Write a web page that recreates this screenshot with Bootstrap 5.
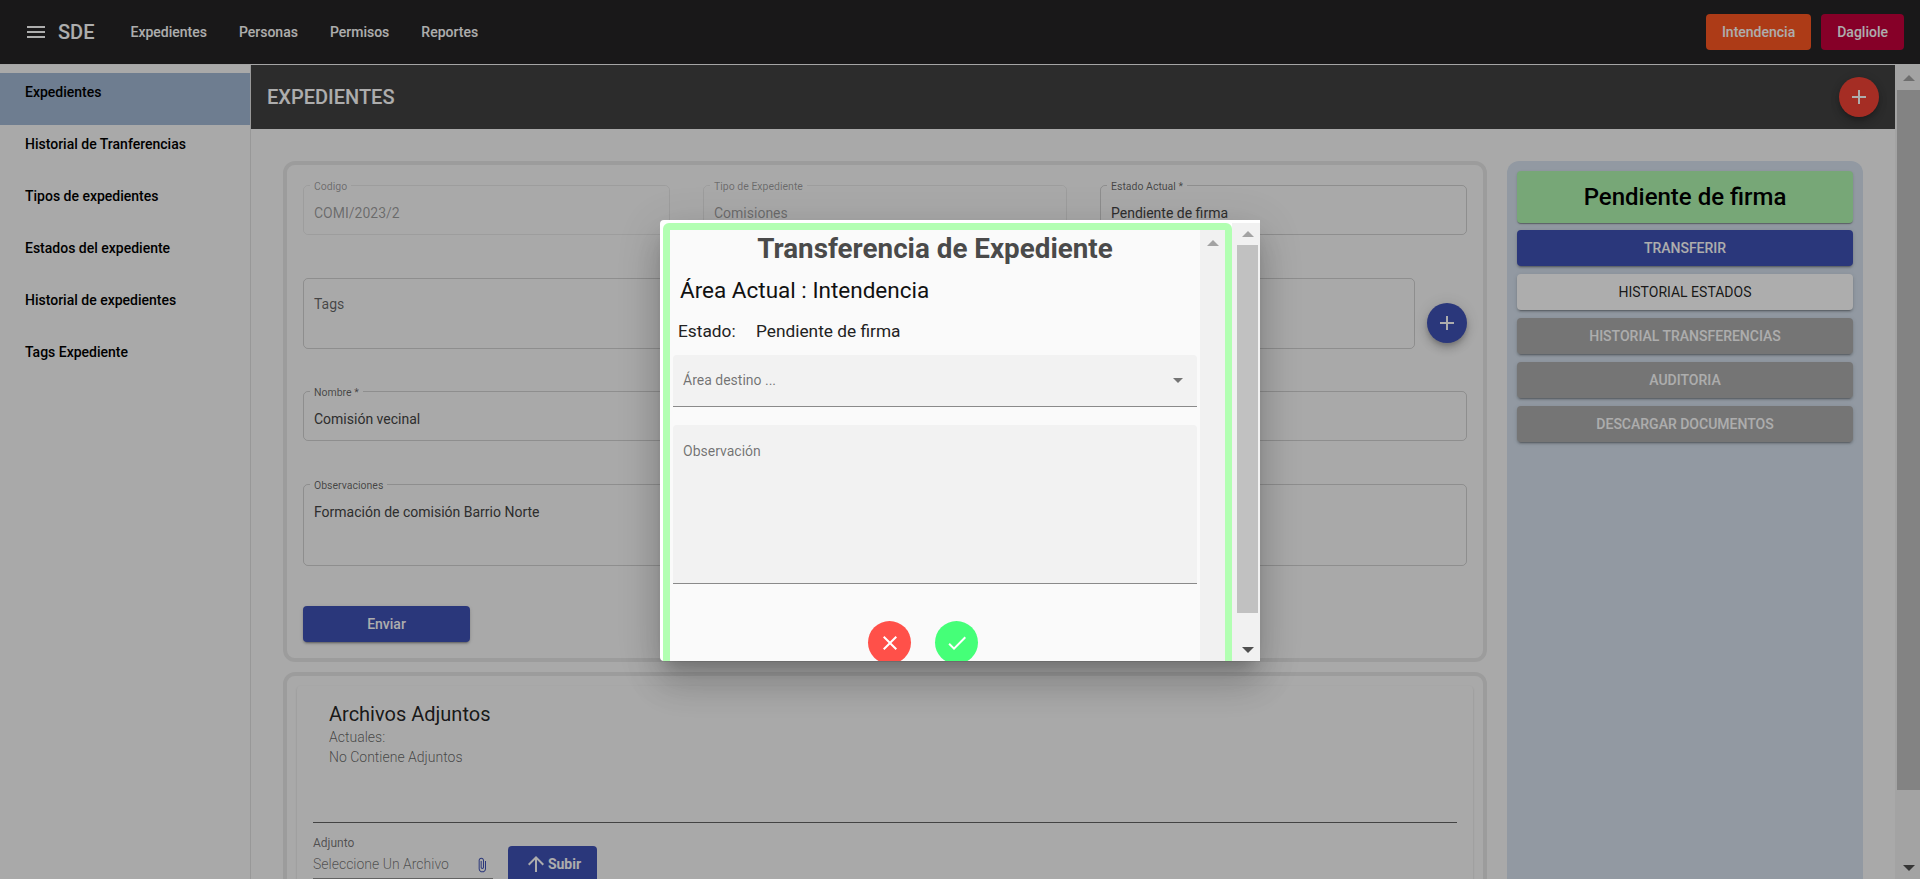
<!DOCTYPE html>
<html lang="es">
<head>
    <meta charset="UTF-8">
    <meta name="viewport" content="width=device-width, initial-scale=1.0">
    <title>SDE - Expedientes</title>
    <link rel="stylesheet" href="https://cdn.jsdelivr.net/npm/bootstrap@5.3.0/dist/css/bootstrap.min.css">
    <style>
        html, body { height: 100%; overflow: hidden; }
        body { font-family: Roboto, "Liberation Sans", sans-serif; font-size: 14px; background: #fafafa; color: rgba(0,0,0,.87); }
        svg { fill: currentColor; display: block; flex: none; }

        /* Barra superior */
        .barra-top { height: 65px; padding: 0 16px 0 24px; background: #262425; border-bottom: 1px solid #f4f4f4; flex: none; color: #fff; }
        .barra-top .navbar-brand { font-size: 20px; font-weight: 500; color: #fff; padding: 0; margin: 0 36px 0 10px; }
        .barra-top .navbar-nav .nav-link { font-size: 14px; font-weight: 500; color: #fff; padding: 0; margin-right: 32px; }
        .btn-top { height: 36px; padding: 0 16px; font-size: 14px; font-weight: 500; color: #fff; border: 0; border-radius: 4px; }
        .btn-area { background: #ff5722; }
        .btn-user { background: #c6003c; }
        .grupo-top { gap: 10px; }

        /* Lateral */
        .lateral { width: 251px; flex: none; padding-top: 8px; border-right: 1px solid #e0e0e0; }
        .lateral .list-group-item { height: 52px; padding: 10px 0 0 25px; border: 0; background: transparent; font-weight: 500; font-size: 14px; line-height: 18px; color: #000; border-radius: 0; }
        .lateral .list-group-item.active { background: #a2b8d4; color: #000; }

        .cabecera { height: 64px; background: #424242; color: #fff; padding: 0 16px 0 16px; flex: none; }
        .cabecera h1 { font-size: 20px; font-weight: 500; margin: 0; }
        .btn-redondo { width: 40px; height: 40px; border-radius: 50%; border: 0; color: #fff; padding: 0; flex: none; box-shadow: 0 3px 5px -1px rgba(0,0,0,.2), 0 6px 10px 0 rgba(0,0,0,.14), 0 1px 18px 0 rgba(0,0,0,.12); }
        .fondo-rojo { background: #f44336; }
        .fondo-azul { background: #3f51b5; }

        .zona { padding: 32px 32px 0 32px; gap: 20px; min-height: 0; overflow: hidden; }
        .marco { border: 4px solid #e6e6e6; border-radius: 12px; }
        .marco-form { padding: 12px 16px 16px; margin-bottom: 10px; }
        .fila-campos { display: grid; grid-template-columns: 367px 364px 367px; column-gap: 33px; }
        .campo { height: 58px; margin: 0; padding: 0 6px; border: 1px solid rgba(0,0,0,.16); border-radius: 5px; min-width: 0; }
        .campo legend { float: none; width: auto; font-size: 10.5px; line-height: 12px; margin: 0; padding: 4px 4px 0; color: rgba(0,0,0,.6); }
        .campo .valor { padding: 10px 4px 0; line-height: 20px; color: #444; }
        .campo.apagado { border-color: rgba(0,0,0,.07); }
        .campo.apagado legend, .campo.apagado .valor { color: rgba(0,0,0,.38); }
        .campo-nombre { margin-top: 34px; }
        .campo-obs { margin-top: 35px; height: 90px; }
        .campo-tags { height: 71px; margin-top: 43px; padding: 15px 10px; border: 1px solid rgba(0,0,0,.16); border-radius: 5px; color: rgba(0,0,0,.6); line-height: 20px; }
        .fila-tags { gap: 12px; }
        .btn-mas { margin-top: 68px; }
        .btn-enviar { display: block; width: 167px; height: 36px; margin-top: 40px; padding: 0; font-size: 14px; font-weight: 500; color: #fff; background: #3f51b5; border: 0; border-radius: 4px; box-shadow: 0 3px 1px -2px rgba(0,0,0,.2), 0 2px 2px 0 rgba(0,0,0,.14), 0 1px 5px 0 rgba(0,0,0,.12); }

        .marco-adjuntos { padding: 10px; height: 400px; }
        .caja-adjuntos { padding: 16px 16px 0; height: 100%; background: #fafafa; border: 0; border-radius: 4px; box-shadow: 0 2px 1px -1px rgba(0,0,0,.2), 0 1px 1px 0 rgba(0,0,0,.14), 0 1px 3px 0 rgba(0,0,0,.12); }
        .caja-adjuntos h2 { font-size: 20px; font-weight: 400; line-height: 24px; margin: 0 0 1px 16px; }
        .caja-adjuntos p { margin: 0 0 0 16px; line-height: 20px; color: rgba(0,0,0,.6); font-weight: 300; }
        .linea-adjuntos { height: 56px; border-bottom: 1px solid rgba(0,0,0,.6); margin-bottom: 14px; }
        .selector { width: 180px; border-bottom: 1px solid rgba(0,0,0,.42); height: 42px; color: rgba(0,0,0,.54); font-weight: 300; }
        .selector small { display: block; font-size: 12px; line-height: 13px; margin-bottom: 4px; font-weight: 400; }
        .selector svg { color: #3f51b5; margin-right: 3px; }
        .btn-subir { width: 89px; height: 36px; margin: 9px 0 0 15px; padding: 0; font-size: 14px; font-weight: 700; color: #fff; background: #3f51b5; border: 0; border-radius: 4px; }

        /* Panel derecho */
        .panel { width: 356px; flex: none; padding: 10px; background: #d7e2ef; border-radius: 12px 12px 0 0; }
        .estado-box { height: 52px; line-height: 52px; text-align: center; font-size: 24px; font-weight: 500; color: #000; background: #b0f7b0; border-radius: 4px; margin-bottom: 7px; box-shadow: 0 2px 1px -1px rgba(0,0,0,.2), 0 1px 1px 0 rgba(0,0,0,.14), 0 1px 3px 0 rgba(0,0,0,.12); }
        .btn-panel { display: block; width: 100%; height: 36px; margin-bottom: 8px; padding: 0; font-size: 14px; font-weight: 500; border: 0; border-radius: 4px; text-transform: uppercase; box-shadow: 0 3px 1px -2px rgba(0,0,0,.2), 0 2px 2px 0 rgba(0,0,0,.14), 0 1px 5px 0 rgba(0,0,0,.12); }
        .btn-panel.azul { background: #3f51b5; color: #fff; }
        .btn-panel.blanco { background: #fff; color: rgba(0,0,0,.87); font-weight: 400; }
        .btn-panel.gris { background: #adadad; color: #fff; }

        /* Barras de desplazamiento dibujadas */
        .scroll-y { background: #f1f1f1; flex: none; }
        .scroll-pagina { width: 25px; padding-left: 2px; }
        .scroll-dialogo { width: 28px; padding: 0 2px 0 5px; }
        .scroll-interno { width: 25px; }
        .tope { height: 25px; flex: none; }
        .scroll-dialogo .tope { height: 22px; }
        .flecha-up, .flecha-down { width: 0; height: 0; border-left: 6px solid transparent; border-right: 6px solid transparent; }
        .flecha-up { border-bottom: 6px solid #a3a3a3; }
        .flecha-down { border-top: 6px solid #505050; }
        .pulgar { background: #c1c1c1; }

        /* Dialogo */
        .fondo-oscuro { position: fixed; top: 0; right: 0; bottom: 0; left: 0; z-index: 10; background: rgba(0,0,0,.32); }
        .dialogo { position: fixed; left: 660px; top: 220px; z-index: 11; width: 600px; height: 441px; overflow: hidden; padding: 3px 0 0 3px; background: #fff; border-radius: 4px 0 0 4px; box-shadow: 0 11px 15px -7px rgba(0,0,0,.2), 0 24px 38px 3px rgba(0,0,0,.14), 0 9px 46px 8px rgba(0,0,0,.12); }
        .caja-verde { width: 569px; height: 460px; border: 7px solid #b2ffb2; border-radius: 6px; background: #fafafa; }
        .cuerpo-dialogo { width: 530px; padding: 0 3px; }
        .titulo-dialogo { font-size: 27.8px; font-weight: 700; line-height: 38px; text-align: center; color: #4a4a4a; margin: 0; }
        .area-actual { font-size: 22.5px; line-height: 30px; margin: 7px 0 0 7px; color: #111; }
        .estado-linea { font-size: 17.3px; line-height: 22px; margin: 15px 0 0 5px; color: #222; }
        .estado-linea span { display: inline-block; width: 78px; }
        .relleno { background: #f2f2f2; border-bottom: 1px solid #8a8a8a; border-radius: 4px 4px 0 0; padding: 0 10px; color: rgba(0,0,0,.54); }
        .relleno-select { height: 52px; margin-top: 13px; }
        .relleno-area { height: 159px; margin-top: 18px; padding-top: 16px; line-height: 20px; }
        .flecha-select { width: 0; height: 0; border-left: 5px solid transparent; border-right: 5px solid transparent; border-top: 5px solid #757575; margin-right: 4px; }
        .acciones { gap: 24px; margin-top: 37px; padding-right: 24px; }
        .btn-accion { width: 43px; height: 43px; padding: 0; border: 0; border-radius: 50%; color: #fff; }
        .btn-cancelar { background: #ff5049; }
        .btn-aceptar { background: #45ff78; }
    </style>
</head>
<body class="d-flex flex-column">
    <nav class="navbar navbar-expand barra-top">
        <div class="d-flex align-items-center">
            <svg width="24" height="24" viewBox="0 0 24 24"><path d="M3 18h18v-2H3v2zm0-5h18v-2H3v2zm0-7v2h18V6H3z"/></svg>
            <a class="navbar-brand" href="#">SDE</a>
            <ul class="navbar-nav">
                <li class="nav-item"><a class="nav-link" href="#">Expedientes</a></li>
                <li class="nav-item"><a class="nav-link" href="#">Personas</a></li>
                <li class="nav-item"><a class="nav-link" href="#">Permisos</a></li>
                <li class="nav-item"><a class="nav-link" href="#">Reportes</a></li>
            </ul>
        </div>
        <div class="d-flex grupo-top ms-auto">
            <button class="btn btn-top btn-area">Intendencia</button>
            <button class="btn btn-top btn-user">Dagliole</button>
        </div>
    </nav>

    <div class="d-flex flex-grow-1" style="min-height:0">
        <!-- Menu lateral -->
        <aside class="lateral list-group list-group-flush">
            <a href="#" class="list-group-item active">Expedientes</a>
            <a href="#" class="list-group-item">Historial de Tranferencias</a>
            <a href="#" class="list-group-item">Tipos de expedientes</a>
            <a href="#" class="list-group-item">Estados del expediente</a>
            <a href="#" class="list-group-item">Historial de expedientes</a>
            <a href="#" class="list-group-item">Tags Expediente</a>
        </aside>

        <main class="d-flex flex-column flex-grow-1" style="min-width:0">
            <header class="cabecera d-flex align-items-center justify-content-between">
                <h1>EXPEDIENTES</h1>
                <button class="btn-redondo fondo-rojo d-flex align-items-center justify-content-center">
                    <svg width="24" height="24" viewBox="0 0 24 24"><path d="M19 13h-6v6h-2v-6H5v-2h6V5h2v6h6v2z"/></svg>
                </button>
            </header>

            <div class="zona d-flex flex-grow-1">
                <div class="flex-grow-1" style="min-width:0">
                    <form class="marco marco-form">
                        <div class="fila-campos">
                            <fieldset class="campo apagado"><legend>Codigo</legend><div class="valor">COMI/2023/2</div></fieldset>
                            <fieldset class="campo apagado"><legend>Tipo de Expediente</legend><div class="valor">Comisiones</div></fieldset>
                            <fieldset class="campo"><legend>Estado Actual *</legend><div class="valor">Pendiente de firma</div></fieldset>
                        </div>
                        <div class="d-flex fila-tags">
                            <div class="campo-tags flex-grow-1">Tags</div>
                            <button type="button" class="btn-redondo fondo-azul btn-mas d-flex align-items-center justify-content-center">
                                <svg width="24" height="24" viewBox="0 0 24 24"><path d="M19 13h-6v6h-2v-6H5v-2h6V5h2v6h6v2z"/></svg>
                            </button>
                        </div>
                        <fieldset class="campo campo-nombre"><legend>Nombre *</legend><div class="valor">Comisión vecinal</div></fieldset>
                        <fieldset class="campo campo-obs"><legend>Observaciones</legend><div class="valor">Formación de comisión Barrio Norte</div></fieldset>
                        <button type="button" class="btn-enviar">Enviar</button>
                    </form>

                    <section class="marco marco-adjuntos">
                        <div class="card caja-adjuntos">
                            <h2>Archivos Adjuntos</h2>
                            <p>Actuales:</p>
                            <p>No Contiene Adjuntos</p>
                            <div class="linea-adjuntos"></div>
                            <div class="d-flex">
                                <div class="selector">
                                    <small>Adjunto</small>
                                    <div class="d-flex align-items-center justify-content-between">
                                        <span>Seleccione Un Archivo</span>
                                        <svg width="16" height="16" viewBox="0 0 24 24"><path d="M16.5 6v11.5c0 2.21-1.79 4-4 4s-4-1.79-4-4V5c0-1.38 1.12-2.5 2.5-2.5s2.5 1.12 2.5 2.5v10.5c0 .55-.45 1-1 1s-1-.45-1-1V6H10v9.5c0 1.38 1.12 2.5 2.5 2.5s2.5-1.12 2.5-2.5V5c0-2.21-1.79-4-4-4S7 2.79 7 5v12.5c0 3.04 2.46 5.5 5.5 5.5s5.5-2.46 5.5-5.5V6h-1.5z"/></svg>
                                    </div>
                                </div>
                                <button type="button" class="btn btn-subir d-flex align-items-center justify-content-center">
                                    <svg width="24" height="24" viewBox="0 0 24 24"><path d="M4 12l1.41 1.41L11 7.83V20h2V7.83l5.58 5.59L20 12l-8-8-8 8z"/></svg>
                                    Subir
                                </button>
                            </div>
                        </div>
                    </section>
                </div>

                <!-- Panel de estado -->
                <aside class="panel">
                    <div class="estado-box">Pendiente de firma</div>
                    <button class="btn-panel azul">Transferir</button>
                    <button class="btn-panel blanco">Historial Estados</button>
                    <button class="btn-panel gris">Historial Transferencias</button>
                    <button class="btn-panel gris">Auditoria</button>
                    <button class="btn-panel gris">Descargar Documentos</button>
                </aside>
            </div>
        </main>

        <div class="scroll-y scroll-pagina d-flex flex-column">
            <div class="tope d-flex align-items-center justify-content-center"><div class="flecha-up"></div></div>
            <div class="pulgar" style="height:700px"></div>
            <div class="d-flex flex-column flex-grow-1 justify-content-end align-items-center pb-2"><div class="flecha-down"></div></div>
        </div>
    </div>

    <div class="fondo-oscuro"></div>

    <!-- Dialogo de transferencia -->
    <div class="dialogo d-flex">
        <div class="caja-verde d-flex">
            <div class="cuerpo-dialogo">
                <h2 class="titulo-dialogo">Transferencia de Expediente</h2>
                <div class="area-actual">Área Actual : Intendencia</div>
                <div class="estado-linea"><span>Estado:</span>Pendiente de firma</div>
                <div class="relleno relleno-select d-flex align-items-center justify-content-between">
                    <span>Área destino ...</span>
                    <div class="flecha-select"></div>
                </div>
                <div class="relleno relleno-area">Observación</div>
                <div class="acciones d-flex justify-content-center">
                    <button class="btn-accion btn-cancelar d-flex align-items-center justify-content-center">
                        <svg width="24" height="24" viewBox="0 0 24 24"><path d="M19 6.41L17.59 5 12 10.59 6.41 5 5 6.41 10.59 12 5 17.59 6.41 19 12 13.41 17.59 19 19 17.59 13.41 12z"/></svg>
                    </button>
                    <button class="btn-accion btn-aceptar d-flex align-items-center justify-content-center">
                        <svg width="24" height="24" viewBox="0 0 24 24"><path d="M9 16.17L4.83 12l-1.42 1.41L9 19 21 7l-1.41-1.41z"/></svg>
                    </button>
                </div>
            </div>
            <div class="scroll-y scroll-interno d-flex flex-column">
                <div class="tope d-flex align-items-center justify-content-center"><div class="flecha-up"></div></div>
            </div>
        </div>
        <div class="scroll-y scroll-dialogo d-flex flex-column">
            <div class="tope d-flex align-items-center justify-content-center"><div class="flecha-up"></div></div>
            <div class="pulgar" style="height:368px"></div>
            <div class="d-flex flex-column flex-grow-1 justify-content-end align-items-center pb-2"><div class="flecha-down"></div></div>
        </div>
    </div>

    <script src="https://cdn.jsdelivr.net/npm/bootstrap@5.3.0/dist/js/bootstrap.bundle.min.js"></script>
</body>
</html>
